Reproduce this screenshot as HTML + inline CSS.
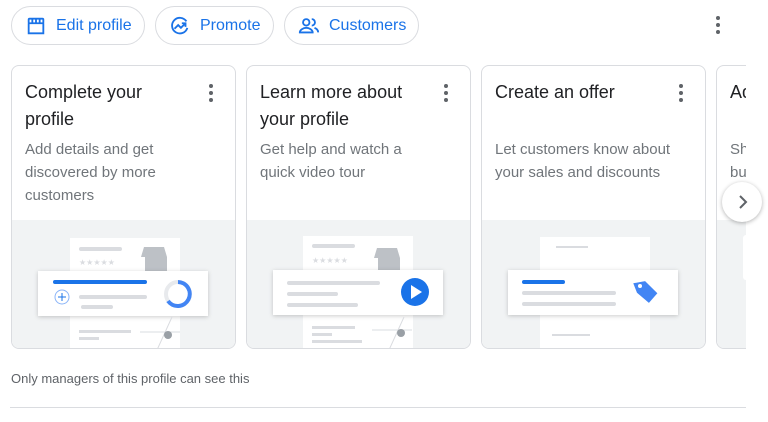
<!DOCTYPE html>
<html><head><style>
*{box-sizing:border-box;margin:0;padding:0}
body{width:768px;height:422px;background:#fff;font-family:"Liberation Sans",Arial,sans-serif;position:relative;overflow:hidden}
.btn{position:absolute;top:6px;height:39px;border:1px solid #dadce0;border-radius:20px;color:#1a73e8;font-size:16px;display:flex;align-items:center;padding-left:13px;gap:9px}
.btn svg{width:22px;height:22px}
.card{position:absolute;top:65px;width:225px;height:284px;border:1px solid #dadce0;border-radius:8px;overflow:hidden;background:#fff}
.card h3{position:absolute;left:13px;top:13px;font-weight:normal;font-size:18px;line-height:27px;color:#202124;width:200px;white-space:nowrap}
.card p{position:absolute;left:13px;top:72px;font-size:15px;line-height:23px;color:#70757a;width:210px;white-space:nowrap}
.card .gray{position:absolute;left:0;right:0;top:154px;bottom:0;background:#f1f3f4}
.kb{position:absolute;right:22px;top:18px;width:4px}
.kb i{display:block;width:4px;height:4px;border-radius:2px;background:#5f6368;margin-bottom:3px}
</style></head><body>
<div class="btn" style="left:11px;width:134px"><svg viewBox="0 0 24 24" fill="none" stroke="#1a73e8" stroke-width="2"><rect x="4" y="4" width="16" height="5" rx="1"/><path d="M4 9v11h16V9M8 4v5M12 4v5M16 4v5"/></svg>Edit profile</div>
<div class="btn" style="left:155px;width:119px"><svg viewBox="0 0 24 24" fill="none" stroke="#1a73e8" stroke-width="2"><path d="M19 7A8.5 8.5 0 1 0 20 14"/><path d="M6 15l4-4 3 3 5-5M14 9h4v4"/></svg>Promote</div>
<div class="btn" style="left:284px;width:135px"><svg viewBox="0 0 24 24" fill="#1a73e8"><circle cx="9" cy="8" r="3.5" fill="none" stroke="#1a73e8" stroke-width="2"/><path d="M2 19c0-3 4-5 7-5s7 2 7 5H2z" fill="none" stroke="#1a73e8" stroke-width="2"/><path d="M15 4.5a3.5 3.5 0 0 1 0 7M18 14c2 1 4 2 4 5" fill="none" stroke="#1a73e8" stroke-width="2"/></svg>Customers</div>
<div style="position:absolute;left:716px;top:16px"><div class="kb" style="position:static"><i></i><i></i><i></i></div></div>

<div class="card" style="left:11px"><h3>Complete your<br>profile</h3><div class="kb"><i></i><i></i><i></i></div><p>Add details and get<br>discovered by more<br>customers</p><div class="gray">
<svg width="225" height="130" viewBox="0 0 225 130">
<rect x="58" y="18" width="110" height="112" fill="#fff"/>
<rect x="67" y="27" width="43" height="4" rx="2" fill="#dadce0"/>
<text x="67" y="45" font-size="8" fill="#dadce0">★★★★★</text>
<path d="M132 27h20l3 10h-26z" fill="#bdc1c6"/><rect x="133" y="37" width="22" height="16" fill="#bdc1c6"/>
<rect x="26" y="51" width="170" height="45" fill="#fff" style="filter:drop-shadow(0 1px 2px rgba(0,0,0,.2))"/>
<rect x="41" y="60" width="94" height="4" rx="2" fill="#1a73e8"/>
<circle cx="50" cy="77" r="7" fill="none" stroke="#8ab4f8"/><path d="M46 77h8M50 73v8" stroke="#1a73e8"/>
<rect x="67" y="75" width="68" height="4" rx="2" fill="#dadce0"/><rect x="69" y="85" width="32" height="4" rx="2" fill="#dadce0"/>
<circle cx="166" cy="74" r="12" fill="none" stroke="#e8eaed" stroke-width="4"/>
<path d="M166 62a12 12 0 1 1-10 19" fill="none" stroke="#4285f4" stroke-width="4"/>
<rect x="67" y="110" width="52" height="3" fill="#dadce0"/><rect x="67" y="117" width="20" height="3" fill="#dadce0"/>
<path d="M145 130l15-33M128 112h40" stroke="#dadce0"/><circle cx="156" cy="115" r="4" fill="#9aa0a6"/>
</svg></div></div>

<div class="card" style="left:246px"><h3>Learn more about<br>your profile</h3><div class="kb"><i></i><i></i><i></i></div><p>Get help and watch a<br>quick video tour</p><div class="gray">
<svg width="225" height="130" viewBox="0 0 225 130">
<rect x="56" y="16" width="110" height="114" fill="#fff"/>
<rect x="65" y="24" width="43" height="4" rx="2" fill="#dadce0"/>
<text x="65" y="43" font-size="8" fill="#dadce0">★★★★★</text>
<path d="M130 28h20l3 10h-26z" fill="#bdc1c6"/><rect x="131" y="38" width="22" height="16" fill="#bdc1c6"/>
<rect x="26" y="50" width="170" height="45" fill="#fff" style="filter:drop-shadow(0 1px 2px rgba(0,0,0,.2))"/>
<rect x="40" y="61" width="93" height="4" rx="2" fill="#dadce0"/><rect x="40" y="72" width="51" height="4" rx="2" fill="#dadce0"/><rect x="40" y="83" width="71" height="4" rx="2" fill="#dadce0"/>
<circle cx="168" cy="72" r="14" fill="#1a73e8"/><path d="M164 65v14l11-7z" fill="#fff"/>
<rect x="65" y="106" width="43" height="3" fill="#dadce0"/><rect x="65" y="113" width="20" height="3" fill="#dadce0"/><rect x="65" y="120" width="50" height="3" fill="#dadce0"/>
<path d="M142 130l15-33M125 110h40" stroke="#dadce0"/><circle cx="154" cy="113" r="4" fill="#9aa0a6"/>
</svg></div></div>

<div class="card" style="left:481px"><h3>Create an offer</h3><div class="kb"><i></i><i></i><i></i></div><p>Let customers know about<br>your sales and discounts</p><div class="gray">
<svg width="225" height="130" viewBox="0 0 225 130">
<rect x="58" y="17" width="110" height="113" fill="#fff"/>
<rect x="74" y="26" width="32" height="2" fill="#dadce0"/>
<rect x="26" y="50" width="170" height="45" fill="#fff" style="filter:drop-shadow(0 1px 2px rgba(0,0,0,.2))"/>
<rect x="40" y="60" width="43" height="4" rx="2" fill="#1a73e8"/><rect x="40" y="71" width="94" height="4" rx="2" fill="#dadce0"/><rect x="40" y="82" width="94" height="4" rx="2" fill="#dadce0"/>
<path d="M153 61l12 0l10 14l-10 8l-10-12z" fill="#4285f4" transform="rotate(-10 165 72)"/><circle cx="158" cy="66" r="2" fill="#fff"/>
<rect x="70" y="114" width="38" height="2" fill="#dadce0"/>
</svg></div></div>

<div class="card" style="left:716px;width:60px"><h3>Add</h3><p>Show<br>bu</p><div class="gray"><div style="position:absolute;left:26px;top:15px;width:20px;height:45px;background:#fff;border-radius:3px"></div></div></div>
<div style="position:absolute;left:746px;top:60px;width:22px;height:300px;background:#fff"></div>

<div style="position:absolute;left:722px;top:182px;width:40px;height:40px;border-radius:50%;background:#fff;box-shadow:0 1px 4px rgba(0,0,0,.3)"><svg width="40" height="40" viewBox="0 0 40 40"><path d="M18 14l6 6-6 6" fill="none" stroke="#5f6368" stroke-width="2"/></svg></div>

<div style="position:absolute;left:11px;top:371px;font-size:13px;color:#5f6368">Only managers of this profile can see this</div>
<div style="position:absolute;left:10px;top:407px;width:736px;height:1px;background:#dadce0"></div>
</body></html>
